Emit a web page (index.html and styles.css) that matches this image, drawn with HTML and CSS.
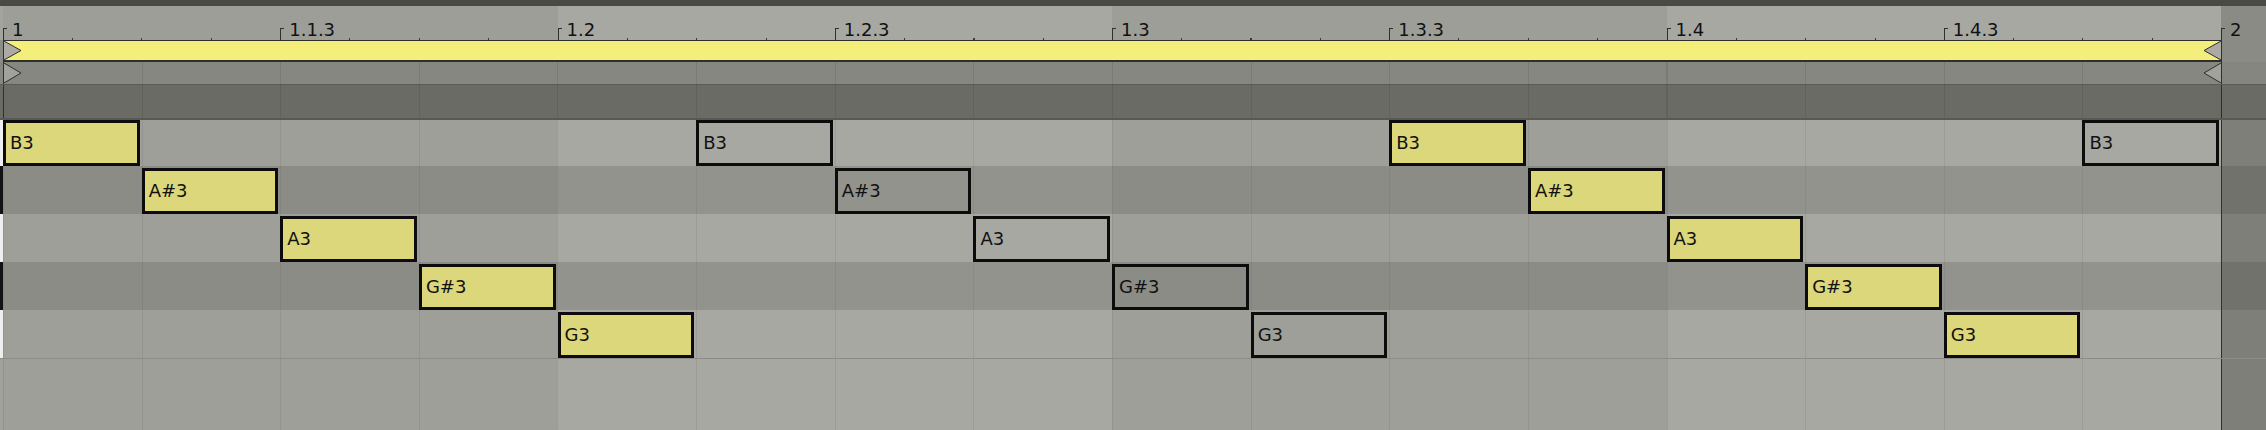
FILE: index.html
```html
<!DOCTYPE html>
<html>
<head>
<meta charset="utf-8">
<link rel="stylesheet" href="styles.css">
</head>
<body>
<div class="topbar"></div>
<div class="ruler">
  <div class="key rk"></div>
  <div class="rlane">
    <div class="rc odd"><i class="brk"></i><span class="lbl">1</span></div>
    <div class="rc odd"><i class="brk"></i><span class="lbl">1.1.3</span></div>
    <div class="rc even"><i class="brk"></i><span class="lbl">1.2</span></div>
    <div class="rc even"><i class="brk"></i><span class="lbl">1.2.3</span></div>
    <div class="rc odd"><i class="brk"></i><span class="lbl">1.3</span></div>
    <div class="rc odd"><i class="brk"></i><span class="lbl">1.3.3</span></div>
    <div class="rc even"><i class="brk"></i><span class="lbl">1.4</span></div>
    <div class="rc even"><i class="brk"></i><span class="lbl">1.4.3</span></div>
  </div>
  <div class="rtail"><i class="brk"></i><span class="lbl">2</span></div>
</div>
<div class="loop">
  <div class="key lk"></div>
  <div class="lane loopbar">
    <svg width="18" height="19" viewBox="0 0 18 19"><path d="M0 0 L17 9.5 L0 19" fill="#abaaa5" stroke="#2f2f2c" stroke-width="1"/></svg>
    <svg width="18" height="19" viewBox="0 0 18 19"><path d="M18 0 L1 9.5 L18 19" fill="#abaaa5" stroke="#2f2f2c" stroke-width="1"/></svg>
  </div>
  <div class="tail ltail"></div>
</div>
<div class="marker">
  <div class="key mk"></div>
  <div class="lane mlane">
    <svg width="18" height="20" viewBox="0 0 18 20"><path d="M0 0 L17 10 L0 20" fill="#a2a29d" stroke="#2f2f2c" stroke-width="1"/></svg>
    <svg width="18" height="20" viewBox="0 0 18 20"><path d="M18 0 L1 10 L18 20" fill="#a2a29d" stroke="#2f2f2c" stroke-width="1"/></svg>
  </div>
  <div class="tail mtail"></div>
</div>
<div class="dark">
  <div class="key dk"></div>
  <div class="lane dlane"></div>
  <div class="tail dtail"></div>
</div>
<div class="row w first">
  <div class="key"></div>
  <div class="lane">
    <div class="note y" style="grid-column:1">B3</div>
    <div class="note" style="grid-column:6">B3</div>
    <div class="note y" style="grid-column:11">B3</div>
    <div class="note" style="grid-column:16">B3</div>
  </div>
  <div class="tail"></div>
</div>
<div class="row b">
  <div class="key"></div>
  <div class="lane">
    <div class="note y" style="grid-column:2">A#3</div>
    <div class="note" style="grid-column:7">A#3</div>
    <div class="note y" style="grid-column:12">A#3</div>
  </div>
  <div class="tail"></div>
</div>
<div class="row w">
  <div class="key"></div>
  <div class="lane">
    <div class="note y" style="grid-column:3">A3</div>
    <div class="note" style="grid-column:8">A3</div>
    <div class="note y" style="grid-column:13">A3</div>
  </div>
  <div class="tail"></div>
</div>
<div class="row b">
  <div class="key"></div>
  <div class="lane">
    <div class="note y" style="grid-column:4">G#3</div>
    <div class="note" style="grid-column:9">G#3</div>
    <div class="note y" style="grid-column:14">G#3</div>
  </div>
  <div class="tail"></div>
</div>
<div class="row w">
  <div class="key"></div>
  <div class="lane">
    <div class="note y" style="grid-column:5">G3</div>
    <div class="note" style="grid-column:10">G3</div>
    <div class="note y" style="grid-column:15">G3</div>
  </div>
  <div class="tail"></div>
</div>
<div class="row w last">
  <div class="key"></div>
  <div class="lane"></div>
  <div class="tail"></div>
</div>
</body>
</html>
```
FILE: styles.css
```css
body {
  margin: 0;
  width: 2266px;
  height: 430px;
  overflow: hidden;
  background: #9f9f9a;
  font-family: "DejaVu Sans", "Liberation Sans", sans-serif;
  color: #111;
}

.topbar {
  height: 6px;
  background: #4a4a45;
}

.key {
  width: 3px;
  flex: none;
}

.lane {
  width: 2218px;
  flex: none;
  box-sizing: border-box;
}

.tail {
  width: 45px;
  flex: none;
  box-sizing: border-box;
  border-left: 1px solid #2f2f2c;
}

/* ruler */
.ruler {
  display: flex;
  height: 34px;
}

.rk {
  background: #a4a49f;
}

.rlane {
  width: 2218px;
  flex: none;
  display: flex;
}

.rc {
  flex: 1;
  display: flex;
  align-items: flex-end;
  background-image: repeating-linear-gradient(to right, #3a3a36 0 1px, transparent 1px 25%);
  background-size: 100% 2px;
  background-repeat: no-repeat;
  background-position: left bottom;
}

.odd {
  background-color: #9e9e99;
}

.even {
  background-color: #a8a8a3;
}

.brk {
  display: block;
  flex: none;
  width: 4px;
  height: 12px;
  box-sizing: border-box;
  border-left: 1px solid #2f2f2c;
  border-top: 1px solid #2f2f2c;
}

.lbl {
  font-size: 18px;
  line-height: 18px;
  margin: 0 0 1.5px 5px;
  white-space: nowrap;
}

.rtail {
  width: 45px;
  flex: none;
  display: flex;
  align-items: flex-end;
  background: #8b8b86;
}

/* loop bar */
.loop {
  display: flex;
  height: 22px;
}

.lk {
  background: #8d8d88;
}

.loopbar {
  display: flex;
  justify-content: space-between;
  align-items: center;
  background: #f4ef7a;
  border-top: 1px solid #2f2f2c;
  border-bottom: 2px solid #2f2f2c;
  border-left: 1px solid #2f2f2c;
}

.loopbar svg,
.mlane svg {
  display: block;
}

.ltail {
  background: #8b8b86;
}

/* marker lane */
.marker {
  display: flex;
  height: 22px;
}

.mk {
  background: #878782;
}

.mlane {
  display: flex;
  justify-content: space-between;
  align-items: center;
  border-left: 1px solid #2f2f2c;
  background: repeating-linear-gradient(to right, #7b7b76 0 1px, transparent 1px 6.25%) #878782;
  background-origin: border-box;
}

.mtail {
  background: #868681;
}

/* dark lane */
.dark {
  display: flex;
  height: 34px;
  box-sizing: border-box;
  border-top: 1px solid #5b5b56;
}

.dk {
  background: #6b6b65;
}

.dlane {
  border-left: 1px solid #2f2f2c;
  background: repeating-linear-gradient(to right, #62625d 0 1px, transparent 1px 6.25%) #6b6b65;
  background-origin: border-box;
}

.dtail {
  background: #6b6b66;
}

/* note rows */
.row {
  display: flex;
  height: 48px;
  box-sizing: border-box;
}

.row.first {
  border-top: 2px solid #595954;
}

.row.last {
  height: 72px;
  border-top: 1px solid #8c8c87;
}

.row .lane {
  display: grid;
  grid-template-columns: repeat(16, 1fr);
}

.w .key {
  background: #efefef;
}

.b .key {
  background: #121212;
}

.last .key {
  background: #a2a29d;
}

.w .lane {
  background:
    repeating-linear-gradient(to right, rgba(0, 0, 0, 0.07) 0 1px, transparent 1px 6.25%),
    linear-gradient(to right, #9f9f9a 0 25%, #a8a8a3 25% 50%, #9f9f9a 50% 75%, #a8a8a3 75%);
}

.b .lane {
  background:
    repeating-linear-gradient(to right, rgba(0, 0, 0, 0.06) 0 1px, transparent 1px 6.25%),
    linear-gradient(to right, #8c8c87 0 25%, #93938e 25% 50%, #8c8c87 50% 75%, #93938e 75%);
}

.w .tail {
  background: #7f7f7a;
}

.b .tail {
  background: #72726d;
}

.note {
  grid-row: 1;
  align-self: end;
  height: 46px;
  box-sizing: border-box;
  border: 3px solid #0c0c0c;
  margin-right: 2px;
  display: flex;
  align-items: center;
  padding-left: 4px;
  font-size: 18px;
  line-height: 18px;
  white-space: nowrap;
  overflow: hidden;
}

.note.y {
  background: #dbd77a;
}
```
